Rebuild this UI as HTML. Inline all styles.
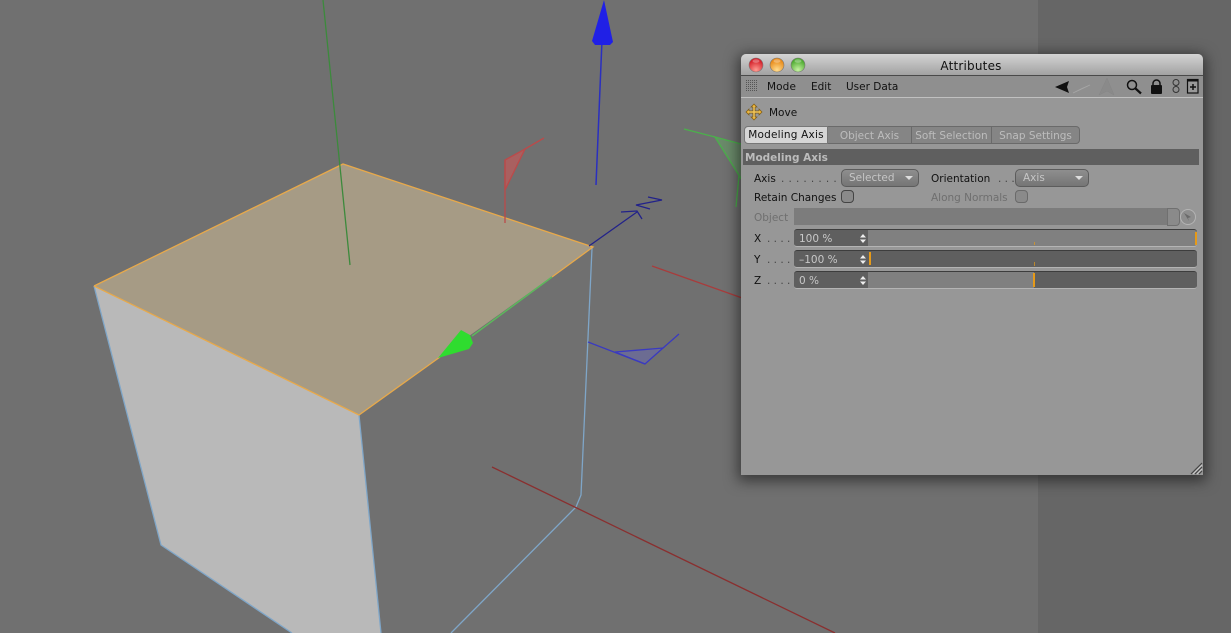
<!DOCTYPE html>
<html><head><meta charset="utf-8"><title>Attributes</title>
<style>
html,body{margin:0;padding:0;width:1231px;height:633px;overflow:hidden;background:#707070}
#vp{position:absolute;left:0;top:0;filter:blur(.3px)}
#p{position:absolute;left:741px;top:54px;width:462px;height:421px;background:#979797;border-radius:5px 5px 0 0;box-shadow:0 3px 14px 3px rgba(0,0,0,.5);overflow:hidden;font-family:"DejaVu Sans","Liberation Sans",sans-serif;font-size:10.5px;color:#111;filter:blur(.3px)}
#p div{position:absolute;white-space:nowrap;box-sizing:border-box}
.t{line-height:14px;height:14px;transform:translateY(1px)}
.dim{color:#6f6f6f}
.tab{top:72px;height:18px;background:#858585;color:#bdbdbd;line-height:18px;text-align:center;border:1px solid #6a6a6a;border-left:0}
.dd{height:18px;background:linear-gradient(#8e8e8e,#757575);border:1px solid #5c5c5c;border-radius:5px;color:#c6c6c6;line-height:16px;padding-left:7px}
.dd i{position:absolute;right:5px;top:6px;width:0;height:0;border:4px solid transparent;border-top:4px solid #ddd;border-bottom:0}
.cb{width:13px;height:13px;border:1.5px solid #444;border-radius:4px;background:#8a8a8a}
.num{left:53px;width:74px;height:18px;background:#5f5f5f;border-radius:3px 0 0 3px;color:#c8c8c8;line-height:18px;padding-left:5px;border-top:1px solid #3d3d3d;border-bottom:1px solid #b4b4b4}
.num b{position:absolute;right:2px;top:4px;width:6px;height:9px}
.sl{left:127px;width:329px;height:18px;background:#5f5f5f;border-top:1px solid #3d3d3d;border-bottom:1px solid #b4b4b4;border-radius:0 3px 3px 0}
.m{width:2px;background:#e69a18}
</style></head><body>
<svg id="vp" width="1231" height="633" viewBox="0 0 1231 633">
<rect width="1231" height="633" fill="#707070"/>
<rect x="1038" width="193" height="633" fill="#666"/>
<polygon points="94,286 359,415 381,633 292,633 161,545" fill="#b9b9b9"/>
<polygon points="343,164 593,247 359,415 94,286" fill="#a69b85"/>
<g fill="none" stroke-width="1.3">
<polyline points="94,286 161,545 292,633" stroke="#7fa6c8"/>
<polyline points="359,415 381,633" stroke="#7fa6c8"/>
<polyline points="592,248 581,495 576,507 451,633" stroke="#7fa6c8"/>
<polyline points="94,286 343,164 593,247 552,277" stroke="#e8a94a"/>
<polyline points="94,286 359,415 440,357" stroke="#e8a94a"/>
<line x1="323" y1="0" x2="350" y2="265" stroke="#3c8a3c"/>
<line x1="602" y1="40" x2="596" y2="185" stroke="#2a2fc0" stroke-width="1.500"/>
<line x1="472" y1="336" x2="552" y2="277" stroke="#5cb85c" stroke-width="1.500"/>
<line x1="492" y1="467" x2="835" y2="633" stroke="#8a2f2f"/>
<line x1="652" y1="266" x2="745" y2="299" stroke="#a83c3c"/>
<polygon points="505,160 525,149 505,190" fill="#a96060" stroke="#bb4a4a"/>
<polyline points="505,223 505,160" stroke="#bb4a4a"/>
<line x1="525" y1="149" x2="544" y2="138" stroke="#bb4a4a"/>
<polygon points="715,137 745,145 745,185" fill="#6a8a6a" stroke="#4bb04b"/>
<line x1="684" y1="129" x2="715" y2="137" stroke="#4bb04b"/>
<line x1="739" y1="176" x2="736" y2="207" stroke="#4bb04b"/>
<polyline points="589,246 637,212" stroke="#22228a"/>
<polyline points="621,212 637,211 642,219" stroke="#22228a"/>
<polyline points="648,197 662,200 636,205 650,209" stroke="#22228a"/>
<polygon points="615,352 663,348 645,364" fill="#6c6c92" stroke="#3a3ac0"/>
<line x1="588" y1="342" x2="645" y2="364" stroke="#3a3ac0"/>
<line x1="663" y1="348" x2="679" y2="334" stroke="#3a3ac0"/>
</g>
<polygon points="604,0 592,41 595,45 610,45 613,42" fill="#2020e6"/>
<polygon points="438,358 461,330 470,335 473,343 469,349" fill="#2fdc2f"/>
</svg>
<div id="p">
<div style="left:0;top:0;width:462px;height:22px;background:linear-gradient(#d4d4d4,#a2a2a2);border-bottom:1px solid #4a4a4a"></div>
<svg style="position:absolute;left:0;top:0" width="70" height="22">
<defs>
<radialGradient id="r" cy=".85" r=".7"><stop offset="0" stop-color="#ff9c92"/><stop offset="1" stop-color="#d4202a"/></radialGradient>
<radialGradient id="o" cy=".85" r=".7"><stop offset="0" stop-color="#ffdc8e"/><stop offset="1" stop-color="#e88a18"/></radialGradient>
<radialGradient id="g" cy=".85" r=".7"><stop offset="0" stop-color="#c6f2a2"/><stop offset="1" stop-color="#4eaa30"/></radialGradient>
</defs>
<circle cx="15" cy="11" r="7" fill="url(#r)" stroke="#777" stroke-width=".6"/>
<circle cx="36" cy="11" r="7" fill="url(#o)" stroke="#777" stroke-width=".6"/>
<circle cx="57" cy="11" r="7" fill="url(#g)" stroke="#777" stroke-width=".6"/>
<ellipse cx="15" cy="7" rx="3.500" ry="1.800" fill="#fff" opacity=".3"/>
<ellipse cx="36" cy="7" rx="3.500" ry="1.800" fill="#fff" opacity=".3"/>
<ellipse cx="57" cy="7" rx="3.500" ry="1.800" fill="#fff" opacity=".3"/>
</svg>
<div class="t" style="left:0;width:460px;top:4px;text-align:center;font-size:12px;letter-spacing:.2px">Attributes</div>
<div style="left:0;top:22px;width:462px;height:22px;background:#8f8f8f;border-bottom:1px solid #c0c0c0"></div>
<svg style="position:absolute;left:5px;top:26px" width="12" height="12"><defs><pattern id="dots" width="2" height="2" patternUnits="userSpaceOnUse"><rect width="1" height="1" fill="#555"/></pattern></defs><rect width="12" height="12" fill="url(#dots)"/></svg>
<div class="t" style="left:26px;top:25px;letter-spacing:.1px">Mode</div>
<div class="t" style="left:70px;top:25px">Edit</div>
<div class="t" style="left:105px;top:25px">User Data</div>
<svg style="position:absolute;left:305px;top:22px" width="157" height="22">
<polygon points="9,11 23,5 21,11 23,17" fill="#111"/>
<polygon points="27,17 44,9 36,12.500" fill="#a6a6a6" stroke="#a6a6a6" stroke-width=".8"/>
<polygon points="61,2 53,19 61,15 68,19" fill="#8a8a8a" stroke="#868686" stroke-width=".5"/>
<circle cx="86" cy="9" r="4.500" fill="none" stroke="#111" stroke-width="1.500"/>
<line x1="89.500" y1="12.500" x2="95" y2="17.500" stroke="#111" stroke-width="2.200"/>
<rect x="105" y="9" width="11" height="9" rx="1" fill="#111"/>
<path d="M107 9V7.500a3.500 3.500 0 0 1 7 0V9" fill="none" stroke="#111" stroke-width="1.500"/>
<circle cx="130" cy="6.500" r="3" fill="none" stroke="#333" stroke-width="1"/>
<circle cx="130" cy="13.500" r="3" fill="none" stroke="#333" stroke-width="1"/>
<rect x="141.500" y="3.500" width="10.500" height="13.500" fill="#999" stroke="#111" stroke-width="1.200"/>
<rect x="141" y="3" width="11" height="2.500" fill="#111"/>
<path d="M147 8v6M144 11h6" stroke="#111" stroke-width="1.500"/>
</svg>
<svg style="position:absolute;left:4px;top:49px" width="20" height="20">
<path d="M9 3v12M3 9h12" stroke="#7a5a18" stroke-width="3"/>
<path d="M9 1l-3 3h6zM9 17l-3-3h6zM1 9l3-3v6zM17 9l-3-3v6z" fill="#eeb02e" stroke="#7a5a18" stroke-width=".7"/>
<path d="M9 3v12M3 9h12" stroke="#f2c65a" stroke-width="1.500"/>
</svg>
<div class="t" style="left:28px;top:51px">Move</div>
<div style="left:3px;top:72px;width:84px;height:18px;background:#d6d6d6;border:1px solid #777;border-radius:4px 0 0 4px;line-height:17px;text-align:center;color:#111;letter-spacing:.2px">Modeling Axis</div>
<div class="tab" style="left:87px;width:84px">Object Axis</div>
<div class="tab" style="left:171px;width:80px">Soft Selection</div>
<div class="tab" style="left:251px;width:88px;border-radius:0 4px 4px 0">Snap Settings</div>
<div style="left:2px;top:95px;width:456px;height:16px;background:#5f5f5f;color:#bcbcbc;font-weight:bold;line-height:18px;padding-left:2px">Modeling Axis</div>
<div class="t" style="left:13px;top:117px">Axis</div>
<div class="t" style="left:40px;top:117px;color:#444;letter-spacing:.4px">. . . . . . . . . .</div>
<div class="dd" style="left:100px;top:115px;width:78px">Selected<i></i></div>
<div class="t" style="left:190px;top:117px">Orientation</div>
<div class="t" style="left:257px;top:117px;color:#444">. . .</div>
<div class="dd" style="left:274px;top:115px;width:74px">Axis<i></i></div>
<div class="t" style="left:13px;top:136px">Retain Changes</div>
<div class="cb" style="left:100px;top:136px"></div>
<div class="t dim" style="left:190px;top:136px">Along Normals</div>
<div class="cb" style="left:274px;top:136px;border-color:#6a6a6a"></div>
<div class="t dim" style="left:13px;top:156px">Object</div>
<div style="left:53px;top:154px;width:373px;height:17px;background:#7c7c7c"></div>
<div style="left:426px;top:154px;width:13px;height:18px;background:#8a8a8a;border:1px solid #707070;border-radius:0 4px 4px 0"></div>
<svg style="position:absolute;left:438px;top:154px" width="18" height="18"><circle cx="9" cy="9" r="7.500" fill="#8e8e8e" stroke="#b4b4b4"/><path d="M5 5l7 4-3 1 1 3z" fill="#6a6a6a"/></svg>
<div class="t" style="left:13px;top:177px">X</div><div class="t" style="left:26px;top:177px;color:#444">. . . .</div>
<div class="num" style="top:175px">100 %<b><svg width="6" height="9" style="display:block"><path d="M3 0l3 3.500H0zM3 9l3-3.500H0z" fill="#eee"/></svg></b></div>
<div class="sl" style="top:175px;background:#808080"></div>
<div class="m" style="left:454px;top:178px;height:13px"></div>
<div class="m" style="left:293px;top:188px;height:3px;width:1px;opacity:.7"></div>
<div class="t" style="left:13px;top:198px">Y</div><div class="t" style="left:26px;top:198px;color:#444">. . . .</div>
<div class="num" style="top:196px">–100 %<b><svg width="6" height="9" style="display:block"><path d="M3 0l3 3.500H0zM3 9l3-3.500H0z" fill="#eee"/></svg></b></div>
<div class="sl" style="top:196px"></div>
<div class="m" style="left:128px;top:198px;height:13px"></div>
<div class="m" style="left:293px;top:208px;height:4px;width:1px;opacity:.7"></div>
<div class="t" style="left:13px;top:219px">Z</div><div class="t" style="left:26px;top:219px;color:#444">. . . .</div>
<div class="num" style="top:217px">0 %<b><svg width="6" height="9" style="display:block"><path d="M3 0l3 3.500H0zM3 9l3-3.500H0z" fill="#eee"/></svg></b></div>
<div class="sl" style="top:217px;background:linear-gradient(90deg,#808080 0,#808080 166px,#5f5f5f 166px)"></div>
<div class="m" style="left:292px;top:219px;height:14px"></div>
<svg style="position:absolute;left:449px;top:408px" width="13" height="13"><path d="M12 1L1 12M12 5L5 12M12 9L9 12" stroke="#444" stroke-width="1.200"/><path d="M12 3L3 12M12 7L7 12" stroke="#ccc" stroke-width="1"/></svg>
</div>
</body></html>
